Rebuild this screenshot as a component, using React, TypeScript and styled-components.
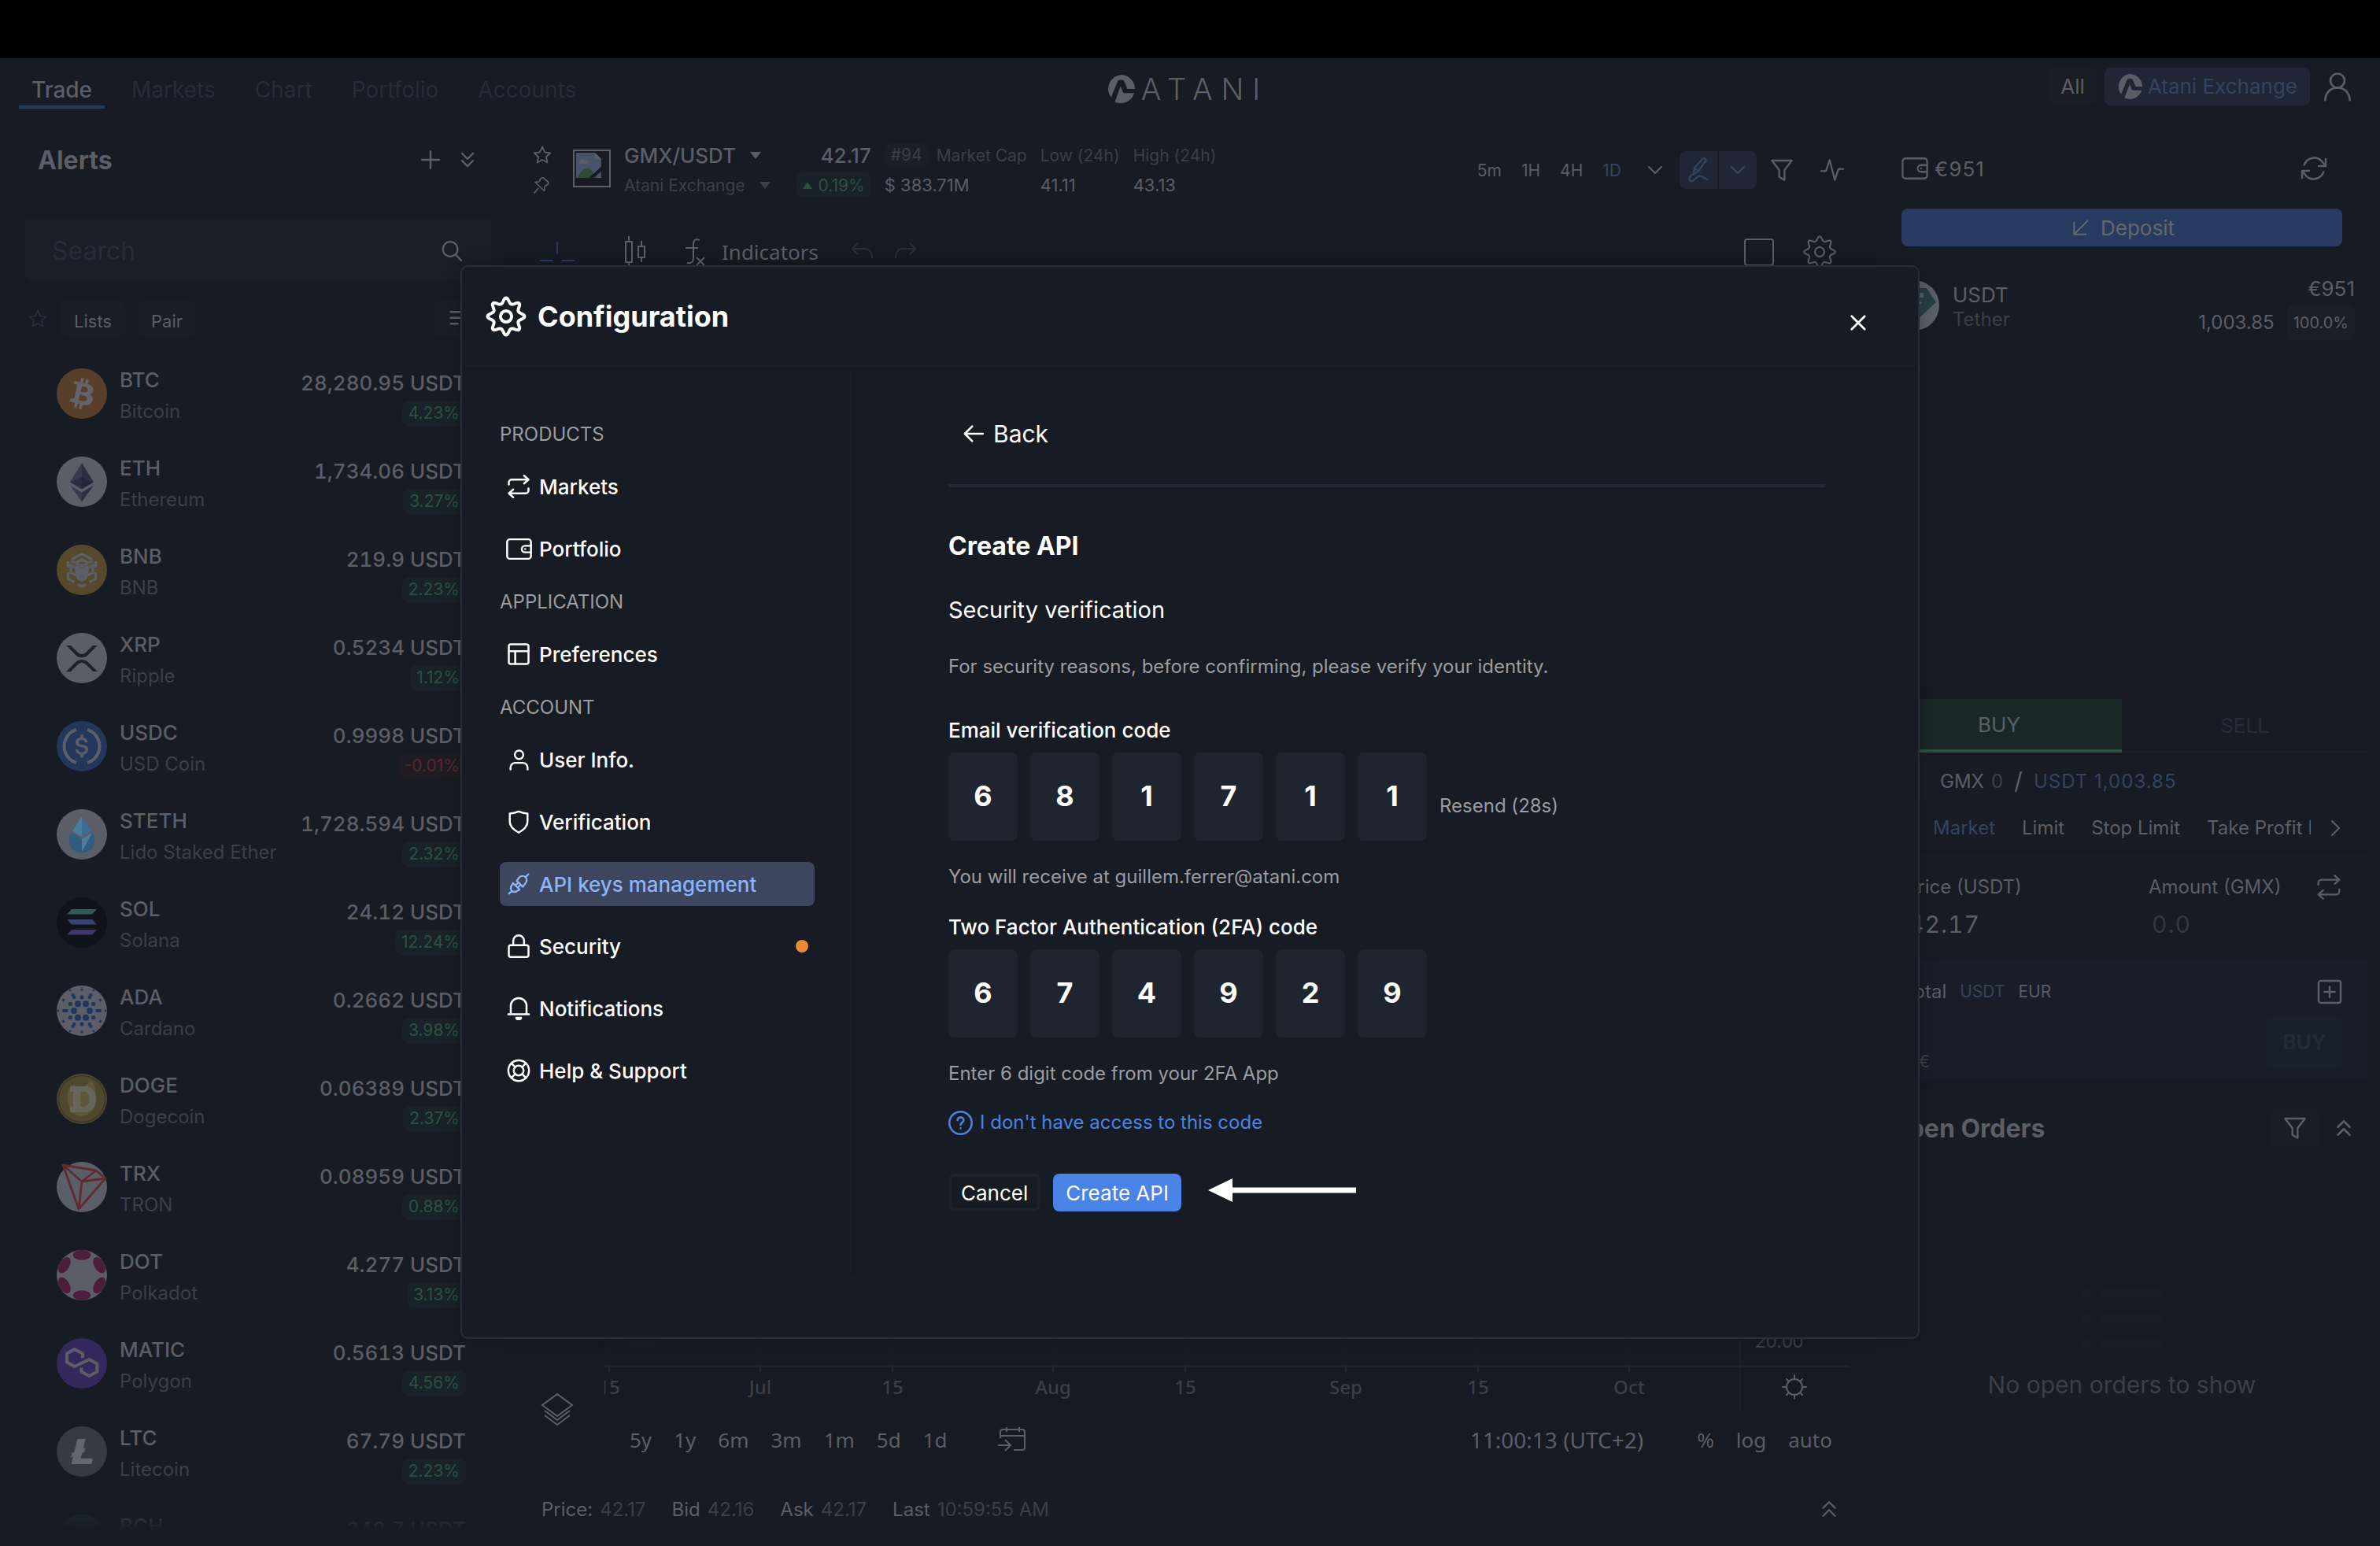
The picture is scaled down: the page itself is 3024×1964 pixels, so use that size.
import React from 'react';
import styled, { createGlobalStyle, css } from 'styled-components';

const c = {
  page: '#161a22',
  panel: '#171b23',
  raised: '#1a1e27',
  ink: '#5b5e66',
  soft: '#3b3f47',
  faint: '#252c3a',
  blue: '#33445f',
  blueDeep: '#263b5f',
  blueBox: '#202636',
  green: '#2c5141',
  greenBox: '#182228',
  red: '#56282f',
  redBox: '#1f1b24',
  rule: '#151921',
  white: '#ffffff',
  muted: '#9b9da1',
  accent: '#4a83e6',
};

const inter = `Inter, "Liberation Sans", sans-serif`;
const chartFont = `"Noto Sans", "Open Sans", sans-serif`;

const Global = createGlobalStyle`
  *, *::before, *::after { box-sizing: border-box; }
  body { margin: 0; background: ${c.page}; font-family: ${inter}; color: ${c.ink}; }
  button, input { font: inherit; color: inherit; background: none; border: 0; padding: 0; margin: 0; outline: none; }
  button { cursor: pointer; white-space: nowrap; }
  a { color: inherit; text-decoration: none; }
  ul { list-style: none; margin: 0; padding: 0; }
  h1, h2, h3, p { margin: 0; font-weight: inherit; }
`;

/* ---------- icons ---------- */

const Svg = styled.svg`
  display: block;
  flex: none;
  overflow: visible;
`;

type IconProps = { size?: number; width?: number; children?: React.ReactNode };
const Icon = ({ size = 32, width = 1.5, children }: IconProps) => (
  <Svg
    width={size}
    height={size}
    viewBox="0 0 24 24"
    fill="none"
    stroke="currentColor"
    strokeWidth={width}
    strokeLinecap="round"
    strokeLinejoin="round"
    aria-hidden="true"
  >
    {children}
  </Svg>
);

const StarIcon = (p: IconProps) => (
  <Icon {...p}><path d="M12 2.500l2.900 6.200 6.600.8-4.900 4.600 1.300 6.700L12 17.500l-5.900 3.300 1.300-6.700-4.900-4.600 6.600-.8z" /></Icon>
);
const PinIcon = (p: IconProps) => (
  <Icon {...p}><path d="M7.500 16.500L3 22M4 8.500c3-.8 4.500.6 5.500-1.500C10.500 4.500 12 2 14.500 3l6 5c1.500 2-1 4-3.500 5-2 1-.5 3.500-1.500 6.500z" /></Icon>
);
const PlusIcon = (p: IconProps) => <Icon {...p}><path d="M12 2v20M2 12h20" /></Icon>;
const ChevronsDown = (p: IconProps) => <Icon {...p}><path d="M6 5l6 6 6-6M6 13l6 6 6-6" /></Icon>;
const ChevronsUp = (p: IconProps) => <Icon {...p}><path d="M6 11l6-6 6 6M6 19l6-6 6 6" /></Icon>;
const ChevronDown = (p: IconProps) => <Icon {...p}><path d="M6 9l6 6 6-6" /></Icon>;
const SearchIcon = (p: IconProps) => <Icon {...p}><circle cx="10.500" cy="10" r="7.500" /><path d="M16 15.500l5.500 6" /></Icon>;
const SortIcon = (p: IconProps) => <Icon {...p}><path d="M3 5h11M3 11h9M3 17h7M18 7v12M15 16l3 3 3-3" /></Icon>;
const FilterIcon = (p: IconProps) => <Icon {...p}><path d="M2.500 3h19l-7 9v9.500l-5-3V12z" /></Icon>;
const PulseIcon = (p: IconProps) => <Icon {...p}><path d="M1.500 13H6L9.500 2.500 14.500 21.500 18 11h4.500" /></Icon>;
const PenIcon = (p: IconProps) => (
  <Icon {...p}><path d="M7.500 15.500L8.500 10 16 1.500c1-1 3.500 1 2.500 2.500L12 13l-4.500 2.500zM8.500 10L12 13M7.500 15.500c-3 1.500-4 3-3.500 5 .5 2 3 2 4.500 0s3.500-3.500 6-3 3 3 6 3" /></Icon>
);
const WalletIcon = (p: IconProps) => (
  <Icon {...p}><rect x="1" y="3" width="22" height="18" rx="2.500" /><path d="M23 9h-5.500a3 3 0 000 6H23M17.600 12h.1" /></Icon>
);
const RefreshIcon = (p: IconProps) => (
  <Icon {...p}><path d="M22 4v6h-6M2 20v-6h6M3.800 9A9 9 0 0118.500 5.600L22 10M2 14l3.500 4.400A9 9 0 0020.200 15" /></Icon>
);
const ArrowDownLeft = (p: IconProps) => <Icon {...p}><path d="M19 5L5 19M5 7v12h12" /></Icon>;
const PersonIcon = (p: IconProps) => (
  <Icon {...p}><circle cx="12" cy="7" r="6" /><path d="M1.500 23.500C2 17 6 13 12 13s10 4 10.500 10.500" /></Icon>
);
const ArrowLeft = (p: IconProps) => <Icon {...p}><path d="M22 12H2.500M10.500 4l-8 8 8 8" /></Icon>;
const CloseIcon = (p: IconProps) => <Icon {...p}><path d="M3 3l18 18M21 3L3 21" /></Icon>;
const HelpIcon = (p: IconProps) => (
  <Icon {...p}><circle cx="12" cy="12" r="11" /><path d="M9 9.500a3 3 0 116 0c0 2-3 2.200-3 4.500M12 17.200v.1" /></Icon>
);
const SwapIcon = (p: IconProps) => (
  <Icon {...p}><path d="M2 10V8a3 3 0 013-3h17M17.500 1L22 5l-4.500 4M22 14v2a3 3 0 01-3 3H2M6.500 15L2 19l4.500 4" /></Icon>
);
const LayoutIcon = (p: IconProps) => (
  <Icon {...p}><rect x="2" y="2" width="20" height="20" rx="2" /><path d="M2 9h20M8.500 9v13" /></Icon>
);
const UserIcon = (p: IconProps) => (
  <Icon {...p}><circle cx="12" cy="6.500" r="4.500" /><path d="M3 22v-2a5 5 0 015-5h8a5 5 0 015 5v2" /></Icon>
);
const ShieldIcon = (p: IconProps) => (
  <Icon {...p}><path d="M12 1.500c3 1.200 6 2 9 2V12c0 5-4.500 8.500-9 11-4.500-2.500-9-6-9-11V3.500c3 0 6-.8 9-2z" /></Icon>
);
const PlugIcon = (p: IconProps) => (
  <Icon {...p}><path d="M22.500 1.500L19.500 4.500M1.500 22.500l3-3M10 8.500l6.500 6.500M10 8.500l3-4a5 5 0 016.500 0 5 5 0 010 6.500l-3 4M6 11l7 7M6 11l-1.500 2.500a5 5 0 000 6 5 5 0 006 0L13 18M8.500 13.500l3-3M11 16l3-3" /></Icon>
);
const LockIcon = (p: IconProps) => (
  <Icon {...p}><rect x="2" y="11" width="20" height="12" rx="2" /><path d="M6.500 11V6.500a5.500 5.500 0 0111 0V11" /></Icon>
);
const BellIcon = (p: IconProps) => (
  <Icon {...p}><path d="M1.500 18h21M4 18V9.500a8 8 0 0116 0V18" /><path d="M9.500 21.500h5c0 2-5 2-5 0z" fill="currentColor" /></Icon>
);
const LifebuoyIcon = (p: IconProps) => (
  <Icon {...p}><circle cx="12" cy="12" r="10.500" /><circle cx="12" cy="12" r="5" /><path d="M4.800 4.800l3.700 3.700M15.500 15.500l3.700 3.700M15.500 8.500l3.700-3.700M4.800 19.200l3.700-3.700" /></Icon>
);
const PlusSquare = (p: IconProps) => (
  <Icon {...p}><rect x="1.500" y="1.500" width="21" height="21" rx="2" /><path d="M12 7v10M7 12h10" /></Icon>
);

const cogPath = () => {
  const points = Array.from({ length: 120 }, (_, i) => {
    const a = (i * Math.PI) / 60;
    const wave = Math.cos(8 * a);
    const r = 9.500 + 1.600 * wave + 0.200 * Math.cos(16 * a);
    return `${(12 + r * Math.sin(a)).toFixed(2)} ${(12 - r * Math.cos(a)).toFixed(2)}`;
  });
  return `M${points.join('L')}Z`;
};
const CogIcon = (p: IconProps) => (
  <Icon {...p}><path d={cogPath()} /><circle cx="12" cy="12" r="3.400" /></Icon>
);
const SunIcon = (p: IconProps) => (
  <Icon {...p}><circle cx="12" cy="12" r="8" /><path d="M12 0v4M12 20v4M0 12h4M20 12h4M4 4l2 2M18 18l2 2M20 4l-2 2M4 20l2-2" /></Icon>
);

const AtaniMark = ({ size }: { size: number }) => (
  <Svg width={size} height={size} viewBox="0 0 36 36" fill="currentColor" aria-hidden="true">
    <path d="M18 0a18 18 0 0118 18H26.500L22 7.500c-.5-1.200-7-1.200-7.500 0L5.800 28.800A18 18 0 0118 0z" />
    <path d="M17.800 14.500l3 7.500c.3.800 1 1.300 1.900 1.300h12.400A18 18 0 0110.500 34.400z" />
  </Svg>
);

/* ---------- coin marks ---------- */

const W = c.ink;
const coinArt: Record<string, { bg: string; art: React.ReactNode }> = {
  BTC: { bg: '#583f2a', art: <path fill="#64636a" d="M23.189 14.02c.314-2.096-1.283-3.223-3.465-3.975l.708-2.84-1.728-.43-.69 2.765c-.454-.114-.92-.22-1.385-.326l.695-2.783L15.596 6l-.708 2.839c-.376-.086-.746-.17-1.104-.26l.002-.009-2.384-.595-.46 1.846s1.283.294 1.256.312c.7.175.826.638.805 1.006l-.806 3.235c.048.012.11.03.18.057l-.183-.045-1.13 4.532c-.086.212-.303.531-.793.41.018.025-1.256-.313-1.256-.313l-.858 1.978 2.25.561c.418.105.828.215 1.231.318l-.715 2.872 1.727.43.708-2.84c.472.127.93.245 1.378.357l-.706 2.828 1.728.43.715-2.866c2.948.558 5.164.333 6.097-2.333.752-2.146-.037-3.385-1.588-4.192 1.13-.26 1.98-1.003 2.207-2.538zm-3.95 5.538c-.533 2.147-4.148.986-5.32.695l.95-3.805c1.172.293 4.929.872 4.37 3.11zm.535-5.569c-.487 1.953-3.495.96-4.47.717l.86-3.45c.975.243 4.118.696 3.61 2.733z" /> },
  ETH: { bg: W, art: <><path fill="#383a4b" d="M16 4v8.700l-7.500 3.500z" /><path fill="#2c2d42" d="M16 4l7.500 12.200-7.500-3.500zM8.500 16.200L16 12.700v8z" /><path fill="#242539" d="M16 12.700l7.500 3.500L16 20.700z" /><path fill="#383a4b" d="M8.500 18.300l7.500 4.500v6z" /><path fill="#2c2d42" d="M16 22.800l7.500-4.500L16 28.800z" /></> },
  BNB: {
    bg: '#55482b',
    art: (
      <g fill="none" stroke={W} strokeWidth="1.700">
        <path d="M9.500 9.200L16 6l6.500 3.200M7.200 14.500v-4M24.800 14.500v-4M7.200 17.500v4.200l4 2.100M24.800 17.500v4.200l-4 2.100M13.500 25.200l2.500 1.200 2.500-1.200M9 10.200l2.500 1.300M23 10.200l-2.500 1.300" />
        <path d="M16 9.500l4 2-4 2-4-2zM9 13l3.500 2v4.500L9 17.700zM23 13l-3.500 2v4.500l3.500-1.800z" />
        <path fill={W} stroke="none" d="M12.500 13l3.500 1.700 3.500-1.700v8.500L16 23.500l-3.500-2z" />
      </g>
    ),
  },
  XRP: { bg: W, art: <path fill="#1e2228" d="M23.070 8h2.890l-6.015 5.957a5.621 5.621 0 01-7.890 0L6.035 8H8.930l4.570 4.523a3.556 3.556 0 004.996 0L23.070 8zM8.895 24.563H6l6.055-5.993a5.621 5.621 0 017.890 0L26 24.562h-2.895L18.500 20a3.556 3.556 0 00-4.996 0l-4.610 4.563z" /> },
  USDC: { bg: '#22375a', art: <><path fill={W} d="M20.022 18.124c0-2.124-1.280-2.852-3.840-3.156-1.828-.243-2.193-.728-2.193-1.578 0-.85.61-1.396 1.828-1.396 1.097 0 1.707.364 2.011 1.275a.458.458 0 00.427.303h.975a.416.416 0 00.427-.425v-.06a3.040 3.040 0 00-2.743-2.489V9.142c0-.243-.183-.425-.487-.486h-.915c-.243 0-.426.182-.487.486v1.396c-1.829.242-2.986 1.456-2.986 2.974 0 2.002 1.218 2.791 3.778 3.095 1.707.303 2.255.668 2.255 1.639 0 .97-.853 1.638-2.011 1.638-1.585 0-2.133-.667-2.316-1.578-.06-.242-.244-.364-.427-.364h-1.036a.416.416 0 00-.426.425v.06c.243 1.518 1.219 2.610 3.230 2.914v1.457c0 .242.183.425.487.485h.915c.243 0 .426-.182.487-.485V21.340c1.829-.303 3.047-1.578 3.047-3.217z" /><path fill="none" stroke={W} strokeWidth="2" d="M12.500 5.500a11 11 0 000 21M19.500 5.500a11 11 0 010 21" /></> },
  STETH: { bg: W, art: <><path fill="#2f5d80" d="M9.500 15C6 20 8 27.500 16 27.500S26 20 22.500 15L16 19z" /><path fill="#3b6d92" d="M16 4.500l6 9.500-6 3.500z" /><path fill="#4a7ea0" d="M16 4.500L10 14l6 3.500z" /><path fill="#4f7d9b" d="M16 19l6.500-4L16 27z" /></> },
  SOL: { bg: '#101319', art: <><path fill="#2f5a56" d="M9.500 7.500h16l-3 3.200h-16z" /><path fill="#3a4470" d="M6.500 14h16l3 3.200h-16z" /><path fill="#40346f" d="M9.500 20.500h16l-3 3.200h-16z" /></> },
  ADA: {
    bg: W,
    art: (
      <g fill="#20365f">
        {[[5, 6, 2, 0], [8.500, 6, 1.300, 30], [9.800, 6, 1.100, 0], [11.400, 6, 1.100, 0], [13.500, 6, 0.900, 30], [15, 6, 0.700, 0]].map(([r, n, s, o]) =>
          Array.from({ length: n }, (_, i) => {
            const a = ((i * 60 + o) * Math.PI) / 180;
            return <circle key={`${r}-${i}`} cx={16 + r * Math.cos(a)} cy={16 + r * Math.sin(a)} r={s} />;
          }),
        )}
      </g>
    ),
  },
  DOGE: { bg: '#50472f', art: <><circle cx="16" cy="16" r="14.800" fill="none" stroke="#3f3a2b" /><path fill="#5f563c" d="M7 12c1-5 4-6 6-4h5l4-4c3 4 3 8 2 12 1 6-2 10-8 11-6 0-10-6-9-15z" /><path fill="#676459" fillRule="evenodd" d="M8.500 8H18c9.500 0 9.500 16.500 0 16.500H8.500V21h2v-9.500h-2zm6.500 3.500V21h2.500c4.500 0 4.500-9.500 0-9.500z" /></> },
  TRX: { bg: W, art: <path fill="none" stroke="#5e2c2f" strokeWidth="1.400" strokeLinejoin="round" d="M4 2l21 3.500 6 5L14 30zM4 2l12 10.500L31 10.500M16 12.500L14 30M16 12.500L25 5.500" /> },
  DOT: {
    bg: W,
    art: (
      <g fill="#4e1d3c">
        {[0, 60, 120, 180, 240, 300].map((a) => (
          <ellipse key={a} cx="16" cy="3.200" rx="5.600" ry="3.200" transform={`rotate(${a} 16 16)`} />
        ))}
      </g>
    ),
  },
  MATIC: { bg: '#35295c', art: <path fill="none" stroke={W} strokeWidth="2" strokeLinejoin="round" d="M16.500 12.500v-2.700L11.300 7 6.500 9.800v5.400l4.800 2.800 9.400-4.500 5 2.800v5L20.700 24l-5-2.800v-2.500" /> },
  LTC: { bg: '#373a42', art: <path fill="#63666c" d="M10.427 19.214L9 19.768l.688-2.759 1.444-.58L13.213 8h5.129l-1.519 6.196 1.410-.571-.68 2.750-1.427.571-.848 3.483H23L22.127 24H9.252z" /> },
  BCH: { bg: '#1b3034', art: <path fill="none" stroke="#2f4447" strokeWidth="2" d="M11 10l7-2c5-1 5 5 1 6l-5 1M13 9l3 14" /> },
  USDT: { bg: W, art: <><path fill="#234044" d="M8 5h16l6 9-14 13L2 14z" /><path fill={W} d="M10 8h12v3h-4.500v2c4 .3 5 2 0 2.500V21h-3v-5.500c-5-.5-4-2.200 0-2.500v-2H10z" /></> },
};

const CoinMark = ({ symbol }: { symbol: string }) => (
  <Svg width={64} height={64} viewBox="0 0 32 32" aria-hidden="true">
    <circle cx="16" cy="16" r="16" fill={coinArt[symbol].bg} />
    {coinArt[symbol].art}
  </Svg>
);

/* ---------- shell ---------- */

const Page = styled.div`
  height: 100vh;
  display: flex;
  flex-direction: column;
  overflow: hidden;
`;
const MenuBar = styled.div`
  height: 74px;
  flex: none;
  background: #000;
`;
const Shell = styled.div`
  flex: 1;
  min-height: 0;
  display: flex;
  flex-direction: column;
  position: relative;
`;
const TopBar = styled.header`
  height: 71px;
  flex: none;
  display: grid;
  grid-template-columns: 1fr auto 1fr;
  align-items: center;
  padding: 0 36px 0 24px;
  background: ${c.panel};
`;
const Nav = styled.nav`
  display: flex;
  align-self: stretch;
  padding-top: 15px;
  gap: 18px;
`;
const NavLink = styled.a<{ $on?: boolean }>`
  height: 49px;
  line-height: 50px;
  padding: 0 16px;
  font-size: 28px;
  font-weight: ${(p) => (p.$on ? 500 : 400)};
  color: ${(p) => (p.$on ? c.ink : c.faint)};
  border-bottom: 4px solid ${(p) => (p.$on ? c.blueDeep : 'transparent')};
`;
const Brand = styled.div`
  display: flex;
  align-items: center;
  gap: 8px;
  padding: 6px 0 0 6px;
  font-size: 38px;
  line-height: 44px;
  font-weight: 300;
  letter-spacing: 11px;
`;
const TopActions = styled.div`
  display: flex;
  justify-content: flex-end;
  align-items: center;
  gap: 9px;
`;
const Chip = styled.button<{ $tone?: 'blue' }>`
  height: 48px;
  padding: 6px 17px 0;
  display: flex;
  align-items: center;
  gap: 8px;
  border-radius: 8px;
  font-size: 22px;
  background: ${(p) => (p.$tone ? c.blueBox : '#191d25')};
  color: ${(p) => (p.$tone ? c.blue : c.ink)};
`;
const TopChip = styled(Chip)`
  padding: 0 16px;
  gap: 7px;
  font-size: 26px;
  svg { color: ${c.ink}; }
`;
const IconButton = styled.button`
  display: flex;
  align-items: center;
  justify-content: center;
`;
const ProfileButton = styled(IconButton)`
  margin-left: 8px;
`;
const Workspace = styled.main`
  flex: 1;
  min-height: 0;
  display: grid;
  grid-template-columns: 624px minmax(0, 1fr) 624px;
  gap: 16px;
  padding: 16px;
`;
const Column = styled.section`
  display: flex;
  flex-direction: column;
  gap: 16px;
  min-height: 0;
  min-width: 0;
`;
const Panel = styled.div`
  background: ${c.panel};
`;

/* ---------- watch list ---------- */

const AlertsHead = styled(Panel)`
  height: 84px;
  display: flex;
  align-items: center;
  padding: 0 32px;
  gap: 20px;
`;
const PanelTitle = styled.h2`
  flex: 1;
  font-size: 32px;
  font-weight: 700;
`;
const Watch = styled(Panel)`
  flex: 1;
  min-height: 0;
  overflow: hidden;
  padding: 16px 0 0;
  position: relative;
  &::after {
    content: '';
    position: absolute;
    inset: auto 0 0 0;
    height: 48px;
    background: linear-gradient(transparent, ${c.panel} 90%);
  }
`;
const SearchBox = styled.label`
  height: 80px;
  margin: 0 16px;
  padding: 3px 35px 0 34px;
  display: flex;
  align-items: center;
  border-radius: 8px;
  background: ${c.raised};
`;
const SearchInput = styled.input`
  flex: 1;
  min-width: 0;
  font-size: 32px;
  &::placeholder { color: ${c.faint}; opacity: 1; }
`;
const Filters = styled.div`
  display: flex;
  align-items: center;
  gap: 16px;
  padding: 24px 16px 16px 19px;
  > :first-child { color: ${c.faint}; }
`;
const SortChip = styled(Chip)`
  margin-left: auto;
  width: 72px;
  padding-top: 0;
`;
const CoinRow = styled.li`
  height: 112px;
  padding: 0 48px 0 56px;
  display: flex;
  align-items: center;
  gap: 16px;
  border-bottom: 2px solid ${c.rule};
`;
const CoinText = styled.div`
  display: flex;
  flex-direction: column;
  gap: 8px;
  flex: 1;
  padding-top: 6px;
`;
const Symbol_ = styled.strong`
  font-size: 26px;
  line-height: 32px;
  font-weight: 500;
`;
const Caption = styled.span`
  min-height: 32px;
  font-size: 24px;
  line-height: 32px;
  color: ${c.soft};
`;
const CoinFigures = styled.div`
  display: flex;
  flex-direction: column;
  align-items: flex-end;
  gap: 6px;
  padding-top: 11px;
`;
const Price = styled.span`
  font-size: 26px;
  line-height: 32px;
  font-weight: 500;
  font-variant-numeric: tabular-nums;
`;
const Badge = styled.span<{ $down?: boolean }>`
  height: 32px;
  padding: 0 8px;
  display: flex;
  align-items: center;
  gap: 8px;
  border-radius: 8px;
  font-size: 21px;
  color: ${(p) => (p.$down ? c.red : c.green)};
  background: ${(p) => (p.$down ? c.redBox : c.greenBox)};
`;

const coins: { symbol: string; name?: string; price: string; change?: string }[] = [
  { symbol: 'BTC', name: 'Bitcoin', price: '28,280.95', change: '4.23%' },
  { symbol: 'ETH', name: 'Ethereum', price: '1,734.06', change: '3.27%' },
  { symbol: 'BNB', name: 'BNB', price: '219.9', change: '2.23%' },
  { symbol: 'XRP', name: 'Ripple', price: '0.5234', change: '1.12%' },
  { symbol: 'USDC', name: 'USD Coin', price: '0.9998', change: '-0.01%' },
  { symbol: 'STETH', name: 'Lido Staked Ether', price: '1,728.594', change: '2.32%' },
  { symbol: 'SOL', name: 'Solana', price: '24.12', change: '12.24%' },
  { symbol: 'ADA', name: 'Cardano', price: '0.2662', change: '3.98%' },
  { symbol: 'DOGE', name: 'Dogecoin', price: '0.06389', change: '2.37%' },
  { symbol: 'TRX', name: 'TRON', price: '0.08959', change: '0.88%' },
  { symbol: 'DOT', name: 'Polkadot', price: '4.277', change: '3.13%' },
  { symbol: 'MATIC', name: 'Polygon', price: '0.5613', change: '4.56%' },
  { symbol: 'LTC', name: 'Litecoin', price: '67.79', change: '2.23%' },
  { symbol: 'BCH', price: '242.7' },
];

const WatchColumn = () => (
  <Column>
    <AlertsHead>
      <PanelTitle>Alerts</PanelTitle>
      <IconButton aria-label="Add alert"><PlusIcon size={26} width={2.200} /></IconButton>
      <IconButton aria-label="Collapse alerts"><ChevronsDown size={28} width={2} /></IconButton>
    </AlertsHead>
    <Watch>
      <SearchBox>
        <SearchInput placeholder="Search" aria-label="Search" />
        <SearchIcon size={30} width={1.800} />
      </SearchBox>
      <Filters>
        <StarIcon size={26} width={1.800} />
        <Chip>Lists</Chip>
        <Chip>Pair</Chip>
        <SortChip aria-label="Sort"><SortIcon size={30} width={2} /></SortChip>
      </Filters>
      <ul>
        {coins.map(({ symbol, name, price, change }) => (
          <CoinRow key={symbol}>
            <CoinMark symbol={symbol} />
            <CoinText>
              <Symbol_>{symbol}</Symbol_>
              <Caption>{name}</Caption>
            </CoinText>
            <CoinFigures>
              <Price>{price} USDT</Price>
              {change ? <Badge $down={change.startsWith('-')}>{change}</Badge> : <Caption />}
            </CoinFigures>
          </CoinRow>
        ))}
      </ul>
    </Watch>
  </Column>
);

/* ---------- chart ---------- */

const Ticker = styled(Panel)`
  height: 105px;
  display: flex;
  align-items: flex-start;
  padding: 17px 8px 0 20px;
`;
const TickerCol = styled.div<{ $gap?: number; $end?: boolean }>`
  display: flex;
  flex-direction: column;
  align-items: ${(p) => (p.$end ? 'flex-end' : 'flex-start')};
  margin-right: ${(p) => p.$gap ?? 17}px;
`;
const Line = styled.div<{ $soft?: boolean; $big?: boolean }>`
  height: 38px;
  display: flex;
  align-items: center;
  gap: 10px;
  white-space: nowrap;
  font-size: ${(p) => (p.$big ? 26 : p.$soft ? 21 : 22)}px;
  font-weight: ${(p) => (p.$big ? 500 : 400)};
  color: ${(p) => (p.$soft ? c.soft : c.ink)};
`;
const Rank = styled.span`
  padding: 0 8px;
  line-height: 30px;
  border-radius: 8px;
  background: ${c.raised};
`;
const Caret = styled.span`
  margin-left: 8px;
  border: 7px solid transparent;
  border-top: 9px solid currentColor;
  border-bottom: 0;
`;
const Up = styled.span`
  border: 6px solid transparent;
  border-bottom: 9px solid currentColor;
  border-top: 0;
`;
const BrokenImage = styled.div`
  width: 48px;
  height: 48px;
  margin: 12px 17px 0 26px;
  border: 2px solid ${c.ink};
  padding: 2px;
`;
const Intervals = styled.div`
  margin-left: auto;
  height: 76px;
  display: flex;
  align-items: center;
`;
const Interval = styled.button<{ $on?: boolean }>`
  padding: 0 12px 0 13px;
  font-size: 21px;
  color: ${(p) => (p.$on ? c.blue : c.ink)};
`;
const ToolButton = styled(IconButton)<{ $w?: number }>`
  width: ${(p) => p.$w ?? 64}px;
  height: 48px;
`;
const DrawGroup = styled.div`
  display: flex;
  gap: 2px;
  border-radius: 8px;
  overflow: hidden;
  color: ${c.blue};
  > button { background: ${c.blueBox}; }
`;
const ChartPanel = styled(Panel)`
  flex: 1;
  min-height: 0;
  display: flex;
  flex-direction: column;
  font-family: ${chartFont};
  background: ${c.page};
`;
const ChartTools = styled.div`
  height: 76px;
  flex: none;
  display: flex;
  align-items: center;
  padding: 0 35px 0 28px;
  > :nth-child(1) { color: ${c.blueDeep}; margin-right: 61px; }
  > :nth-child(2) { margin-right: 48px; }
  > :nth-child(3) { margin-right: 42px; }
  > :nth-child(5) { margin-left: auto; margin-right: 37px; }
`;
const IndicatorsButton = styled.button`
  display: flex;
  align-items: center;
  gap: 20px;
  font-size: 26px;
`;
const History = styled.div`
  display: flex;
  gap: 28px;
  color: #2a2e36;
`;
const ChartBody = styled.div`
  flex: 1;
  min-height: 0;
  display: flex;
`;
const ToolRail = styled.div`
  width: 106px;
  flex: none;
  display: flex;
  flex-direction: column;
  justify-content: flex-end;
  padding: 0 0 56px 32px;
  border-right: 2px solid ${c.rule};
`;
const Plot = styled.div`
  flex: 1;
  min-width: 0;
  display: flex;
  flex-direction: column;
  justify-content: flex-end;
  padding: 0 18px 0 6px;
`;
const PlotSvg = styled.svg`
  display: block;
  width: 100%;
  height: 200px;
`;
const RangeBar = styled.div`
  height: 78px;
  display: flex;
  align-items: center;
  gap: 28px;
  padding: 0 22px 0 32px;
  font-size: 26px;
  > :nth-child(8) { margin-left: 36px; }
`;
const Clock = styled.span`
  margin-left: auto;
  margin-right: 40px;
  font-size: 28px;
`;
const StatusBar = styled(Panel)`
  height: 64px;
  flex: none;
  display: flex;
  align-items: center;
  gap: 33px;
  padding: 2px 29px 0 32px;
  font-size: 24px;
  > button { margin-left: auto; }
`;
const Quote = styled.span`
  display: flex;
  gap: 9px;
  > em { font-style: normal; color: ${c.soft}; }
`;

const ticks: [number, string][] = [
  [6, '15'], [198, 'Jul'], [366, '15'], [570, 'Aug'], [738, '15'], [942, 'Sep'], [1110, '15'], [1302, 'Oct'],
];

const TimeAxis = () => (
  <PlotSvg viewBox="0 0 1582 200" preserveAspectRatio="xMinYMax meet" role="img" aria-label="Time axis">
    <circle cx="48" cy="95" r="28" fill="#181c24" />
    <path d="M-8 128l-5 7 5 7" stroke={c.soft} strokeWidth="2" fill="none" />
    <path d="M0 145.500h1582" stroke="#20242c" strokeWidth="2.500" />
    {ticks.map(([x, label]) => (
      <g key={x}>
        <path d={`M${x} 0v145`} stroke="#181c24" strokeWidth="2" />
        <path d={`M${x} 146v7`} stroke="#20242c" strokeWidth="2" />
        <text x={x} y="181" textAnchor="middle" fontSize="24" fontWeight="500" fill={c.soft} fontFamily={chartFont}>{label}</text>
      </g>
    ))}
    <path d="M1443 0v200" stroke="#1c2028" strokeWidth="2" />
    <text x="1462" y="122" fontSize="24" fill={c.soft} fontFamily={chartFont}>20.00</text>
    <g transform="translate(1497 157)" color={c.ink}>
      <SunIcon size={30} width={1.600} />
    </g>
  </PlotSvg>
);

const ChartColumn = () => (
  <Column>
    <Ticker>
      <TickerCol $gap={0}>
        <Line><StarIcon size={26} width={1.700} /></Line>
        <Line><PinIcon size={24} width={1.700} /></Line>
      </TickerCol>
      <BrokenImage role="img" aria-label="GMX">
        <Svg width={34} height={34} viewBox="0 0 34 34">
          <path d="M0 0h24l8 8v24H0z" fill="#48536a" />
          <path d="M24 0v8h8z" fill={c.ink} />
          <path d="M4 12c0-4 6-6 8-2 4-1 5 4 2 4H4z" fill={c.ink} />
          <path d="M2 32c2-7 7-12 12-12s9 5 12 12z" fill="#2f4a32" />
          <path d="M34 16L14 34h6l14-12z" fill={c.panel} />
        </Svg>
      </BrokenImage>
      <TickerCol $gap={33}>
        <Line $big>GMX/USDT <Caret /></Line>
        <Line $soft>Atani Exchange <Caret /></Line>
      </TickerCol>
      <TickerCol $end>
        <Line $big>42.17</Line>
        <Line><Badge><Up />0.19%</Badge></Line>
      </TickerCol>
      <TickerCol>
        <Line $soft><Rank>#94</Rank>Market Cap</Line>
        <Line>$ 383.71M</Line>
      </TickerCol>
      <TickerCol>
        <Line $soft>Low (24h)</Line>
        <Line>41.11</Line>
      </TickerCol>
      <TickerCol>
        <Line $soft>High (24h)</Line>
        <Line>43.13</Line>
      </TickerCol>
      <Intervals>
        <Interval>5m</Interval>
        <Interval>1H</Interval>
        <Interval>4H</Interval>
        <Interval $on>1D</Interval>
        <ToolButton $w={62} aria-label="More intervals"><ChevronDown size={32} width={1.700} /></ToolButton>
        <DrawGroup>
          <ToolButton $w={48} aria-label="Draw"><PenIcon size={34} width={1.600} /></ToolButton>
          <ToolButton $w={48} aria-label="Drawing options"><ChevronDown size={32} width={1.700} /></ToolButton>
        </DrawGroup>
        <ToolButton aria-label="Filter"><FilterIcon size={32} width={1.700} /></ToolButton>
        <ToolButton aria-label="Activity"><PulseIcon size={32} width={1.700} /></ToolButton>
      </Intervals>
    </Ticker>
    <ChartPanel>
      <ChartTools>
        <Icon size={48} width={1}><path d="M12 6v7M1 17.500h8M15 17.500h8" /></Icon>
        <Svg width={28} height={40} viewBox="0 0 28 40" fill="none" stroke="currentColor" strokeWidth="2">
          <path d="M2 7h8v26H2zM6 0v7M6 33v6M18 13h8v14h-8zM22 6v7M22 27v6" />
        </Svg>
        <IndicatorsButton>
          <Svg width={28} height={34} viewBox="0 0 28 34" fill="none" stroke="currentColor" strokeWidth="2">
            <path d="M20 2c-5-2-8 0-8 5v18c0 5-3 7-8 6M2 12h16M16 24l10 10M26 24L16 34" />
          </Svg>
          Indicators
        </IndicatorsButton>
        <History>
          <IconButton aria-label="Undo"><Svg width={27} height={24} viewBox="0 0 27 24" fill="none" stroke="currentColor" strokeWidth="2"><path d="M8 1L1 8l7 7M1 8h16c6 0 9 5 9 12" /></Svg></IconButton>
          <IconButton aria-label="Redo"><Svg width={27} height={24} viewBox="0 0 27 24" fill="none" stroke="currentColor" strokeWidth="2"><path d="M19 1l7 7-7 7M26 8H10C4 8 1 13 1 20" /></Svg></IconButton>
        </History>
        <IconButton aria-label="Layout"><Svg width={38} height={34} viewBox="0 0 38 34" fill="none" stroke="currentColor" strokeWidth="2"><rect x="1" y="1" width="36" height="33" rx="3" /></Svg></IconButton>
        <IconButton aria-label="Chart settings"><CogIcon size={42} width={1.200} /></IconButton>
      </ChartTools>
      <ChartBody>
        <ToolRail>
          <Svg width={40} height={42} viewBox="0 0 40 42" fill="none" stroke="currentColor" strokeWidth="2">
            <path d="M20 1l19 14-19 14L1 15zM4 22l16 12 16-12M4 28l16 12 16-12" />
          </Svg>
        </ToolRail>
        <Plot>
          <TimeAxis />
          <RangeBar>
            {['5y', '1y', '6m', '3m', '1m', '5d', '1d'].map((r) => <button key={r}>{r}</button>)}
            <IconButton aria-label="Go to date">
              <Svg width={36} height={32} viewBox="0 0 36 32" fill="none" stroke="currentColor" strokeWidth="2">
                <path d="M3 14V6c0-2 1-3 3-3h25c2 0 3 1 3 3v20c0 2-1 3-3 3H20M3 11h31M11 0v6M27 0v6M0 23h15M9 16l7 7-7 7" />
              </Svg>
            </IconButton>
            <Clock>11:00:13 (UTC+2)</Clock>
            <button>%</button>
            <button>log</button>
            <button>auto</button>
          </RangeBar>
        </Plot>
      </ChartBody>
    </ChartPanel>
    <StatusBar>
      <Quote>Price: <em>42.17</em></Quote>
      <Quote>Bid <em>42.16</em></Quote>
      <Quote>Ask <em>42.17</em></Quote>
      <Quote>Last <em>10:59:55 AM</em></Quote>
      <IconButton aria-label="Expand"><ChevronsUp size={30} width={1.800} /></IconButton>
    </StatusBar>
  </Column>
);

/* ---------- trade column ---------- */

const BalancePanel = styled(Panel)`
  flex: 0 0 711px;
  min-height: 0;
`;
const BalanceHead = styled.div`
  height: 104px;
  padding: 2px 50px 0 32px;
  display: flex;
  align-items: center;
  gap: 8px;
  font-size: 26px;
  > span { flex: 1; letter-spacing: 1px; }
`;
const DepositButton = styled.button`
  display: flex;
  align-items: center;
  justify-content: center;
  gap: 10px;
  width: calc(100% - 64px);
  height: 48px;
  margin: 0 32px;
  border-radius: 8px;
  font-size: 26px;
  color: #66676c;
  background: ${c.blueDeep};
`;
const Holding = styled.div`
  height: 134px;
  padding: 18px 16px 0;
  display: flex;
  align-items: center;
  gap: 17px;
  border-bottom: 2px solid ${c.rule};
`;
const HoldingText = styled.div`
  flex: 1;
  display: flex;
  flex-direction: column;
  padding-top: 6px;
  font-size: 26px;
  line-height: 30px;
`;
const HoldingValue = styled.div`
  display: flex;
  flex-direction: column;
  align-items: flex-end;
  padding-top: 4px;
  font-size: 26px;
  line-height: 40px;
`;
const Share = styled.span`
  display: flex;
  align-items: center;
  gap: 16px;
  font-size: 24px;
  > em {
    font-style: normal;
    padding: 0 8px;
    font-size: 20px;
    line-height: 46px;
    border-radius: 8px;
    background: ${c.raised};
  }
`;
const Sides = styled.div`
  display: grid;
  grid-template-columns: 1fr 1fr;
`;
const Side = styled.button<{ $on?: boolean }>`
  height: 68px;
  font-size: 26px;
  color: ${(p) => (p.$on ? c.ink : c.faint)};
  background: ${(p) => (p.$on ? '#1a2728' : 'none')};
  border-bottom: ${(p) => (p.$on ? `4px solid ${c.green}` : '2px solid #201c26')};
`;
const Funds = styled.div`
  height: 72px;
  display: flex;
  align-items: center;
  padding: 0 16px;
  gap: 9px;
  font-size: 24px;
  > em { font-style: normal; color: ${c.soft}; }
  > b { font-weight: 400; font-size: 30px; margin: 0 5px; }
  > strong { font-weight: 400; color: ${c.blue}; letter-spacing: 1px; }
`;
const FundsChip = styled(Chip)`
  width: 56px;
  padding: 0 12px;
`;
const OrderTypes = styled.div`
  height: 54px;
  display: flex;
  align-items: flex-start;
  padding: 0 30px 0 55px;
  font-size: 24px;
  line-height: 48px;
  border-bottom: 2px solid ${c.rule};
  > svg { margin-top: 12px; }
`;
const TypeTabs = styled.div`
  flex: 1;
  display: flex;
  min-width: 0;
  overflow: hidden;
  margin-right: 18px;
`;
const TypeTab = styled.button<{ $on?: boolean }>`
  padding: 0 17px;
  line-height: 48px;
  color: ${(p) => (p.$on ? c.blue : c.ink)};
`;
const Fields = styled.div`
  height: 136px;
  display: grid;
  grid-template-columns: 309px 1fr 32px;
  padding: 29px 33px 0 37px;
`;
const Field = styled.label`
  display: flex;
  flex-direction: column;
  gap: 11px;
  font-size: 24px;
  line-height: 32px;
`;
const FieldInput = styled.input`
  width: 200px;
  height: 40px;
  padding-left: 4px;
  font-size: 30px;
  letter-spacing: 1px;
  font-variant-numeric: tabular-nums;
  &::placeholder { color: #33373f; opacity: 1; }
`;
const Total = styled.div`
  height: 155px;
  background: #191d28;
  padding: 26px 32px 0 34px;
  display: flex;
  justify-content: space-between;
  font-size: 24px;
  line-height: 32px;
`;
const TotalRow = styled.div`
  display: flex;
  gap: 17px;
  > em { font-style: normal; font-size: 21px; }
  > em:first-child { color: ${c.blue}; }
`;
const TotalSide = styled.div`
  display: flex;
  flex-direction: column;
  align-items: flex-end;
  gap: 16px;
`;
const BuyButton = styled.button`
  width: 96px;
  height: 64px;
  border-radius: 8px;
  font-size: 26px;
  font-weight: 700;
  color: #222a38;
  background: #18212a;
`;
const SmallSoft = styled.div`
  color: ${c.soft};
  font-size: 22px;
  line-height: 40px;
  padding-top: 6px;
`;
const Orders = styled(Panel)`
  flex: 1;
  min-height: 0;
`;
const OrdersHead = styled.div`
  height: 88px;
  display: flex;
  align-items: center;
  padding: 0 15px 0 16px;
  gap: 15px;
`;
const FilterChip = styled(Chip)`
  width: 64px;
  justify-content: center;
  padding: 0;
`;
const Empty = styled.div`
  padding: 155px 0 0;
  display: flex;
  flex-direction: column;
  align-items: center;
  gap: 23px;
  font-size: 30px;
  line-height: 40px;
  color: ${c.soft};
`;

const TradeColumn = () => (
  <Column>
    <BalancePanel>
      <BalanceHead>
        <WalletIcon size={34} width={1.600} />
        <span>€951</span>
        <IconButton aria-label="Refresh"><RefreshIcon size={36} width={1.600} /></IconButton>
      </BalanceHead>
      <DepositButton><ArrowDownLeft size={30} width={1.600} />Deposit</DepositButton>
      <Holding>
        <CoinMark symbol="USDT" />
        <HoldingText>
          <span>USDT</span>
          <Caption>Tether</Caption>
        </HoldingText>
        <HoldingValue>
          <span>€951</span>
          <Share>1,003.85 <em>100.0%</em></Share>
        </HoldingValue>
      </Holding>
    </BalancePanel>
    <Panel>
      <Sides>
        <Side $on>BUY</Side>
        <Side>SELL</Side>
      </Sides>
      <Funds>
        <FundsChip aria-label="Wallet"><WalletIcon size={26} /></FundsChip>
        GMX <em>0</em> <b>/</b> <strong>USDT 1,003.85</strong>
      </Funds>
      <OrderTypes>
        <TypeTabs>
          <TypeTab $on>Market</TypeTab>
          <TypeTab>Limit</TypeTab>
          <TypeTab>Stop Limit</TypeTab>
          <TypeTab>Take Profit Limit</TypeTab>
        </TypeTabs>
        <Icon size={24} width={2.200}><path d="M9 3l9 9-9 9" /></Icon>
      </OrderTypes>
      <Fields>
        <Field>Price (USDT)<FieldInput defaultValue="42.17" /></Field>
        <Field>Amount (GMX)<FieldInput placeholder="0.0" /></Field>
        <SwapIcon size={32} width={1.700} />
      </Fields>
      <Total>
        <div>
          <TotalRow>Total <em>USDT</em> <em>EUR</em></TotalRow>
          <SmallSoft>0</SmallSoft>
          <SmallSoft>0 €</SmallSoft>
        </div>
        <TotalSide>
          <IconButton aria-label="Add"><PlusSquare size={32} width={1.800} /></IconButton>
          <BuyButton>BUY</BuyButton>
        </TotalSide>
      </Total>
    </Panel>
    <Orders>
      <OrdersHead>
        <PanelTitle>Open Orders</PanelTitle>
        <FilterChip aria-label="Filter orders"><FilterIcon size={32} width={1.800} /></FilterChip>
        <IconButton aria-label="Expand orders"><ChevronsUp size={30} width={2} /></IconButton>
      </OrdersHead>
      <Empty>
        <Svg width={106} height={84} viewBox="0 0 106 84" fill="#191d25">
          {[5, 37, 69].map((y) => (
            <g key={y}><rect x="0" y={y} width="16" height="10" rx="5" /><rect x="26" y={y} width="80" height="10" rx="4" /></g>
          ))}
        </Svg>
        No open orders to show
      </Empty>
    </Orders>
  </Column>
);

/* ---------- configuration dialog ---------- */

const Overlay = styled.div`
  position: absolute;
  inset: 0;
  display: flex;
  align-items: center;
  justify-content: center;
`;
const Dialog = styled.div`
  width: 1854px;
  max-width: 94%;
  padding-bottom: 80px;
  color: ${c.white};
  background: ${c.panel};
  border: 2px solid #262e3c;
  border-radius: 10px;
  box-shadow: 0 0 20px rgba(0, 0, 0, 0.25);
`;
const DialogHead = styled.header`
  height: 132px;
  display: flex;
  align-items: center;
  gap: 15px;
  padding: 0 64px 2px 31px;
  border-bottom: 4px solid #14181f;
`;
const DialogTitle = styled.h1`
  flex: 1;
  font-size: 36px;
  line-height: 48px;
  font-weight: 700;
`;
const CloseButton = styled(IconButton)`
  width: 24px;
  height: 24px;
  margin-top: 16px;
`;
const DialogBody = styled.div`
  display: flex;
`;
const Menu = styled.nav`
  width: 500px;
  flex: none;
  padding: 66px 48px 0;
  display: flex;
  flex-direction: column;
  gap: 25px;
  border-right: 4px solid #14181f;
`;
const Group = styled.div`
  display: flex;
  flex-direction: column;
  gap: 23px;
`;
const GroupLabel = styled.h3`
  font-size: 24px;
  line-height: 30px;
  color: ${c.muted};
`;
const Item = styled.a<{ $on?: boolean }>`
  height: 56px;
  display: flex;
  align-items: center;
  gap: 10px;
  padding: 0 8px;
  border-radius: 8px;
  font-size: 26px;
  font-weight: 500;
  ${(p) => p.$on && css`
    color: #8cb4f8;
    background: #3d465e;
  `}
`;
const ItemIcon = styled.span`
  width: 32px;
  display: flex;
  justify-content: center;
`;
const Dot = styled.span`
  width: 16px;
  height: 16px;
  margin-left: auto;
  border-radius: 50%;
  background: #e98c33;
`;
const Content = styled.form`
  flex: 1;
  min-width: 0;
  padding: 56px 118px 80px;
  display: flex;
  flex-direction: column;
`;
const BackButton = styled.button`
  align-self: flex-start;
  height: 48px;
  padding: 0 18px;
  display: flex;
  align-items: center;
  gap: 11px;
  font-size: 30px;
`;
const Rule = styled.hr`
  width: 100%;
  height: 4px;
  margin: 40px 0 55px;
  border: 0;
  background: #232838;
`;
const FormTitle = styled.h2`
  font-size: 32px;
  line-height: 40px;
  font-weight: 700;
`;
const FormSubtitle = styled.h3`
  margin-top: 41px;
  font-size: 29px;
  line-height: 40px;
`;
const Hint = styled.p`
  font-size: 24px;
  line-height: 32px;
  color: ${c.muted};
`;
const Lead = styled(Hint)`
  margin-top: 36px;
  margin-bottom: 17px;
`;
const CodeField = styled.fieldset`
  margin: 32px 0 30px;
  padding: 0;
  border: 0;
  min-width: 0;
`;
const CodeLabel = styled.legend`
  padding: 0;
  margin-bottom: 12px;
  font-size: 26px;
  line-height: 32px;
  font-weight: 500;
`;
const CodeRow = styled.div`
  display: flex;
  align-items: center;
  gap: 16px;
`;
const Digit = styled.input`
  width: 88px;
  height: 112px;
  padding-bottom: 2px;
  border-radius: 8px;
  background: #1f252e;
  font-size: 36px;
  font-weight: 700;
  text-align: center;
`;
const Resend = styled(Hint)`
  margin-top: 24px;
`;
const AccessLink = styled.a`
  margin-top: 30px;
  align-self: flex-start;
  display: flex;
  align-items: center;
  gap: 9px;
  font-size: 24px;
  line-height: 32px;
  color: ${c.accent};
`;
const Actions = styled.div`
  margin-top: 49px;
  display: flex;
  align-items: center;
  gap: 16px;
  > svg { margin: 0 0 6px 18px; }
`;
const FormButton = styled.button<{ $primary?: boolean }>`
  height: 48px;
  padding: 0 ${(p) => (p.$primary ? 16 : 12)}px;
  border: ${(p) => (p.$primary ? '0' : '4px solid #1c212b')};
  border-radius: 8px;
  font-size: 26px;
  background: ${(p) => (p.$primary ? c.accent : 'none')};
`;

const CodeInput = ({ label, digits, children }: { label: string; digits: string; children?: React.ReactNode }) => (
  <CodeField>
    <CodeLabel>{label}</CodeLabel>
    <CodeRow>
      {digits.split('').map((d, i) => (
        <Digit key={i} defaultValue={d} maxLength={1} aria-label={`${label}, digit ${i + 1}`} />
      ))}
      {children}
    </CodeRow>
  </CodeField>
);

type MenuItem = { name: string; icon: React.ReactNode; on?: boolean; dot?: boolean };
const menu: { label: string; items: MenuItem[] }[] = [
  {
    label: 'PRODUCTS',
    items: [
      { name: 'Markets', icon: <SwapIcon size={30} width={2} /> },
      { name: 'Portfolio', icon: <WalletIcon size={33} width={1.800} /> },
    ],
  },
  { label: 'APPLICATION', items: [{ name: 'Preferences', icon: <LayoutIcon size={30} width={2} /> }] },
  {
    label: 'ACCOUNT',
    items: [
      { name: 'User Info.', icon: <UserIcon size={29} width={2} /> },
      { name: 'Verification', icon: <ShieldIcon size={30} width={2} /> },
      { name: 'API keys management', icon: <PlugIcon size={28} width={2} />, on: true },
      { name: 'Security', icon: <LockIcon size={30} width={2} />, dot: true },
      { name: 'Notifications', icon: <BellIcon size={30} width={2} /> },
      { name: 'Help & Support', icon: <LifebuoyIcon size={30} width={2} /> },
    ],
  },
];

const Configuration = () => (
  <Overlay>
    <Dialog role="dialog" aria-labelledby="configuration-title">
      <DialogHead>
        <CogIcon size={50} width={1.900} />
        <DialogTitle id="configuration-title">Configuration</DialogTitle>
        <CloseButton aria-label="Close"><CloseIcon size={22} width={3} /></CloseButton>
      </DialogHead>
      <DialogBody>
        <Menu>
          {menu.map((group) => (
            <Group key={group.label}>
              <GroupLabel>{group.label}</GroupLabel>
              {group.items.map((item) => (
                <Item key={item.name} href="#" $on={item.on}>
                  <ItemIcon>{item.icon}</ItemIcon>
                  {item.name}
                  {item.dot && <Dot />}
                </Item>
              ))}
            </Group>
          ))}
        </Menu>
        <Content onSubmit={(e) => e.preventDefault()}>
          <BackButton type="button"><ArrowLeft size={28} width={2.300} />Back</BackButton>
          <Rule />
          <FormTitle>Create API</FormTitle>
          <FormSubtitle>Security verification</FormSubtitle>
          <Lead>For security reasons, before confirming, please verify your identity.</Lead>
          <CodeInput label="Email verification code" digits="681711">
            <Resend as="span">Resend (28s)</Resend>
          </CodeInput>
          <Hint>You will receive at guillem.ferrer@atani.com</Hint>
          <CodeInput label="Two Factor Authentication (2FA) code" digits="674929" />
          <Hint>Enter 6 digit code from your 2FA App</Hint>
          <AccessLink href="#"><HelpIcon size={31} width={2} />I don't have access to this code</AccessLink>
          <Actions>
            <FormButton type="button">Cancel</FormButton>
            <FormButton type="submit" $primary>Create API</FormButton>
            <Svg width={188} height={30} viewBox="0 0 188 30" fill="#fff" aria-hidden="true">
              <path d="M0 15L31 0v11.500h157v7H31V30z" />
            </Svg>
          </Actions>
        </Content>
      </DialogBody>
    </Dialog>
  </Overlay>
);

export default function App() {
  return (
    <>
      <Global />
      <Page>
        <MenuBar />
        <Shell>
          <TopBar>
            <Nav>
              <NavLink href="#" $on>Trade</NavLink>
              <NavLink href="#">Markets</NavLink>
              <NavLink href="#">Chart</NavLink>
              <NavLink href="#">Portfolio</NavLink>
              <NavLink href="#">Accounts</NavLink>
            </Nav>
            <Brand><AtaniMark size={36} />ATANI</Brand>
            <TopActions>
              <TopChip>All</TopChip>
              <TopChip $tone="blue"><AtaniMark size={32} />Atani Exchange</TopChip>
              <ProfileButton aria-label="Profile"><PersonIcon size={36} width={1.800} /></ProfileButton>
            </TopActions>
          </TopBar>
          <Workspace>
            <WatchColumn />
            <ChartColumn />
            <TradeColumn />
          </Workspace>
          <Configuration />
        </Shell>
      </Page>
    </>
  );
}
